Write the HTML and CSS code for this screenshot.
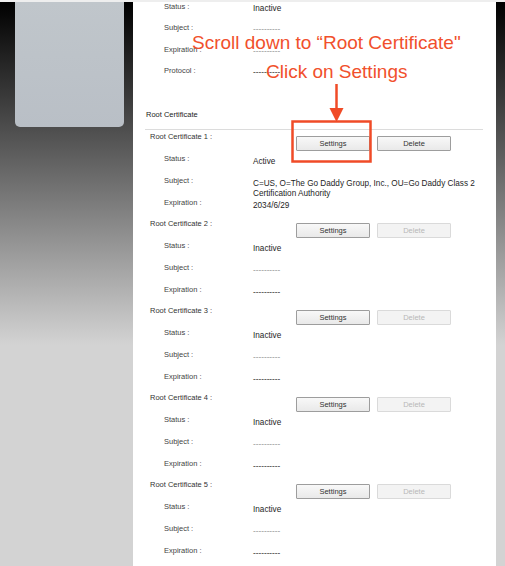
FILE: index.html
```html
<!DOCTYPE html>
<html>
<head>
    <title>Root Certificate</title>
    <link rel="stylesheet" href="styles.css">
</head>
<body>
    <div class="topstrip"></div>
    <div class="page">
        <aside class="side">
            <div class="card"></div>
        </aside>

        <main class="panel">
            <section class="prev">
                <div class="row r21"><span class="label">Status :</span><span class="value">Inactive</span></div>
                <div class="row"><span class="label">Subject :</span><span class="value dash">----------</span></div>
                <div class="row r21"><span class="label">Expiration :</span><span class="value dash">----------</span></div>
                <div class="row"><span class="label">Protocol :</span><span class="value dash dark">----------</span></div>
            </section>

            <h2 class="heading">Root Certificate</h2>

            <div class="cert">
                <div class="cert-head">
                    <span class="cert-name">Root Certificate 1 :</span>
                    <button class="btn">Settings</button>
                    <button class="btn">Delete</button>
                </div>
                <div class="row"><span class="label">Status :</span><span class="value">Active</span></div>
                <div class="row"><span class="label">Subject :</span><span class="value">C=US, O=The Go Daddy Group, Inc., OU=Go Daddy Class 2 Certification Authority</span></div>
                <div class="row last"><span class="label">Expiration :</span><span class="value">2034/6/29</span></div>
            </div>

            <div class="cert">
                <div class="cert-head">
                    <span class="cert-name">Root Certificate 2 :</span>
                    <button class="btn">Settings</button>
                    <button class="btn" disabled>Delete</button>
                </div>
                <div class="row"><span class="label">Status :</span><span class="value">Inactive</span></div>
                <div class="row"><span class="label">Subject :</span><span class="value dash">----------</span></div>
                <div class="row last"><span class="label">Expiration :</span><span class="value dash dark">----------</span></div>
            </div>

            <div class="cert">
                <div class="cert-head">
                    <span class="cert-name">Root Certificate 3 :</span>
                    <button class="btn">Settings</button>
                    <button class="btn" disabled>Delete</button>
                </div>
                <div class="row"><span class="label">Status :</span><span class="value">Inactive</span></div>
                <div class="row"><span class="label">Subject :</span><span class="value dash">----------</span></div>
                <div class="row last"><span class="label">Expiration :</span><span class="value dash dark">----------</span></div>
            </div>

            <div class="cert">
                <div class="cert-head">
                    <span class="cert-name">Root Certificate 4 :</span>
                    <button class="btn">Settings</button>
                    <button class="btn" disabled>Delete</button>
                </div>
                <div class="row"><span class="label">Status :</span><span class="value">Inactive</span></div>
                <div class="row"><span class="label">Subject :</span><span class="value dash">----------</span></div>
                <div class="row last"><span class="label">Expiration :</span><span class="value dash dark">----------</span></div>
            </div>

            <div class="cert">
                <div class="cert-head">
                    <span class="cert-name">Root Certificate 5 :</span>
                    <button class="btn">Settings</button>
                    <button class="btn" disabled>Delete</button>
                </div>
                <div class="row"><span class="label">Status :</span><span class="value">Inactive</span></div>
                <div class="row"><span class="label">Subject :</span><span class="value dash">----------</span></div>
                <div class="row last"><span class="label">Expiration :</span><span class="value dash dark">----------</span></div>
            </div>
        </main>

        <div class="edge"></div>
    </div>

    <!-- annotation drawn over the screenshot -->
    <div class="note note-1">Scroll down to “Root Certificate"</div>
    <div class="note note-2">Click on Settings</div>
    <svg class="marks" width="505" height="566" viewBox="0 0 505 566">
        <line x1="336.5" y1="84" x2="336.5" y2="110" stroke="#f04b27" stroke-width="2.5"/>
        <polygon points="329.5,108 343.5,108 336.5,122" fill="#f04b27"/>
        <rect x="292.5" y="121.5" width="78" height="40" fill="none" stroke="#f04b27" stroke-width="2.5"/>
    </svg>
</body>
</html>
```

FILE: styles.css
```css
html, body {
    margin: 0;
    height: 566px;
    overflow: hidden;
}
body {
    font-family: "Liberation Sans", Arial, sans-serif;
    background: linear-gradient(#000 2px, #3c3c3c 100px, #d3d3d3 345px);
    position: relative;
}
.topstrip {
    height: 2px;
    background-color: #eeeeee;
}
.page {
    display: flex;
    height: 564px;
}
.side {
    width: 133px;
}
.card {
    margin-left: 15px;
    width: 109px;
    height: 125px;
    background: linear-gradient(#c0c6cb, #b9bfc6);
    border-radius: 0 0 5px 5px;
}
.panel {
    width: 351px;
    padding-left: 12px;
    background-color: white;
    overflow: hidden;
}
.edge {
    flex: 1;
}

.prev {
    margin-top: -2px;
    padding-bottom: 23px;
}
.row {
    display: flex;
    align-items: flex-start;
    height: 22px;
    padding-left: 19px;
}
.row.r21 {
    height: 21px;
}
.row.last {
    height: 21px;
}
.label {
    width: 89px;
    flex: none;
    padding-top: 1px;
    font-size: 7.5px;
    line-height: 12px;
    color: #444;
}
.value {
    padding-top: 4px;
    width: 230px;
    font-size: 8.2px;
    line-height: 10px;
    color: #1e1e1e;
}
.cert .value {
    padding-top: 5px;
}
.dash {
    color: #9a9a9a;
}
.dash.dark {
    color: #333;
}

.heading {
    margin: 0 13px 0 1px;
    font-size: 7.5px;
    font-weight: normal;
    line-height: 12px;
    color: #222;
}
.heading::after {
    content: "";
    display: block;
    margin: 8px 0 0 -1px;
    border-bottom: 1px solid #dcdcdc;
}

.cert-head {
    display: flex;
    align-items: flex-start;
    height: 22px;
    padding-left: 5px;
}
.cert-name {
    width: 146px;
    flex: none;
    padding-top: 1px;
    font-size: 7.5px;
    line-height: 12px;
    color: #333;
}
.btn {
    margin: 6px 7px 0 0;
    width: 74px;
    height: 15px;
    padding: 0;
    font-family: "Liberation Sans", Arial, sans-serif;
    font-size: 7.5px;
    color: #333;
    background: linear-gradient(#f8f8f8, #e9e9e9);
    border: 1px solid #9d9d9d;
    border-radius: 1px;
}
.btn:disabled {
    color: #b8b8b8;
    background: #f3f3f3;
    border-color: #dadada;
}

.note {
    position: absolute;
    font-size: 19px;
    line-height: 22px;
    color: #f1502c;
    white-space: nowrap;
}
.note-1 {
    left: 192px;
    top: 32px;
}
.note-2 {
    left: 266px;
    top: 61px;
}
.marks {
    position: absolute;
    left: 0;
    top: 0;
}
```
